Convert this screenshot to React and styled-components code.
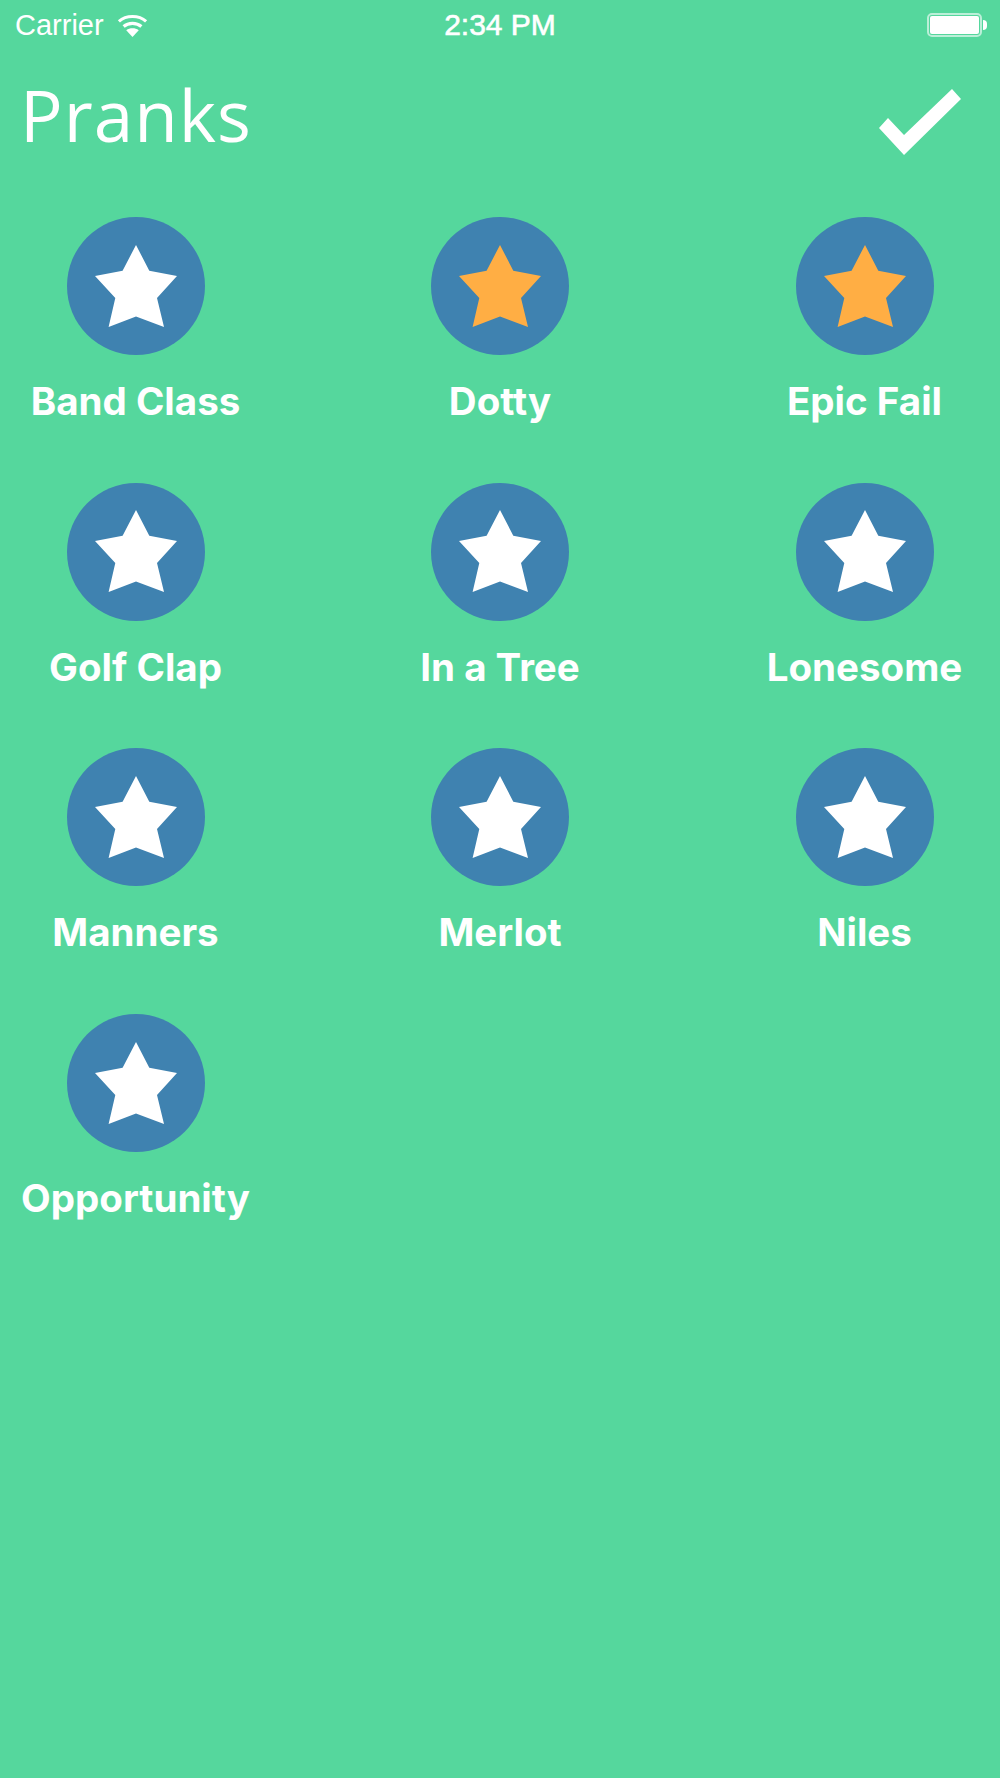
import React from "react";
import styled, { createGlobalStyle } from "styled-components";

const GlobalStyle = createGlobalStyle`
  html, body {
    margin: 0;
    padding: 0;
    background: #55d79d;
  }
`;

const pranks = [
  { name: "Band Class" },
  { name: "Dotty", active: true },
  { name: "Epic Fail", active: true },
  { name: "Golf Clap" },
  { name: "In a Tree" },
  { name: "Lonesome" },
  { name: "Manners" },
  { name: "Merlot" },
  { name: "Niles" },
  { name: "Opportunity" },
];

export default function App() {
  return (
    <Screen>
      <GlobalStyle />
      <StatusBar>
        <Carrier>
          Carrier
          <svg width="31" height="23" viewBox="0 0 29 22">
            <path
              d="M1.5 7C8.5 0.8 20.5 0.8 27.5 7"
              fill="none"
              stroke="#fff"
              strokeWidth="3"
            />
            <path
              d="M6 12C10.5 8 18.5 8 23 12"
              fill="none"
              stroke="#fff"
              strokeWidth="3"
            />
            <path d="M14.5 22L8.5 15.5C12 13 17 13 20.5 15.5Z" fill="#fff" />
          </svg>
        </Carrier>
        <Clock>2:34 PM</Clock>
        <Battery>
          <BatteryFill />
        </Battery>
      </StatusBar>
      <Header>
        <Title>Pranks</Title>
        <CheckIcon width="84" height="68" viewBox="0 0 84 68">
          <polygon points="74,0 83,10 26,66 1,39 10,29 26,46" fill="#fff" />
        </CheckIcon>
      </Header>
      <PrankGrid>
        {pranks.map((prank) => (
          <Prank key={prank.name}>
            <Badge>
              <svg width="82" height="83" viewBox="0 0 82 83">
                <polygon
                  points="41,0 54.3,25.7 82,31 62,53 69,82 41,71.4 13.6,82 20.3,53 0,31 27.6,25.7"
                  fill={prank.active ? "#ffae44" : "#fff"}
                />
              </svg>
            </Badge>
            <Label>{prank.name}</Label>
          </Prank>
        ))}
      </PrankGrid>
    </Screen>
  );
}

const Screen = styled.div`
  width: 1000px;
  height: 1778px;
  overflow: hidden;
  background: #55d79d;
  color: #fff;
`;

const StatusBar = styled.div`
  display: grid;
  grid-template-columns: 1fr auto 1fr;
  align-items: center;
  height: 50px;
  padding: 0 18px 0 15px;
  font-family: "Liberation Sans", Arial, sans-serif;
  font-size: 29px;
`;

const Carrier = styled.div`
  display: flex;
  align-items: center;
  gap: 13px;
`;

const Clock = styled.div`
  margin-left: 3px;
  font-size: 30px;
  -webkit-text-stroke: 0.6px #fff;
`;

const Battery = styled.div`
  position: relative;
  justify-self: end;
  width: 55px;
  height: 24px;
  box-sizing: border-box;
  border: 2px solid rgba(255, 255, 255, 0.6);
  border-radius: 5px;
  padding: 1px;

  &::after {
    content: "";
    position: absolute;
    right: -7px;
    top: 5px;
    width: 4px;
    height: 10px;
    background: #fff;
    border-radius: 0 4px 4px 0;
  }
`;

const BatteryFill = styled.div`
  width: 100%;
  height: 100%;
  background: #fff;
  border-radius: 2px;
`;

const Header = styled.div`
  display: flex;
  align-items: flex-start;
  justify-content: space-between;
  height: 87px;
  padding: 29px 38px 0 20px;
`;

const Title = styled.h1`
  margin: 0;
  font-family: "Open Sans", sans-serif;
  font-weight: 400;
  font-size: 71px;
  line-height: 72px;
  letter-spacing: 1px;
`;

const CheckIcon = styled.svg`
  margin-top: 10px;
`;

const PrankGrid = styled.div`
  display: grid;
  grid-template-columns: repeat(3, 271px);
  justify-content: space-between;
  grid-auto-rows: 265.7px;
  padding-top: 51px;
`;

const Prank = styled.div`
  display: flex;
  flex-direction: column;
  align-items: center;
`;

const Badge = styled.div`
  display: flex;
  align-items: center;
  justify-content: center;
  width: 138px;
  height: 138px;
  border-radius: 50%;
  background: #3f82b0;
`;

const Label = styled.div`
  margin-top: 22px;
  font-family: "Inter", sans-serif;
  font-weight: 700;
  font-size: 38.5px;
  line-height: 48px;
`;
